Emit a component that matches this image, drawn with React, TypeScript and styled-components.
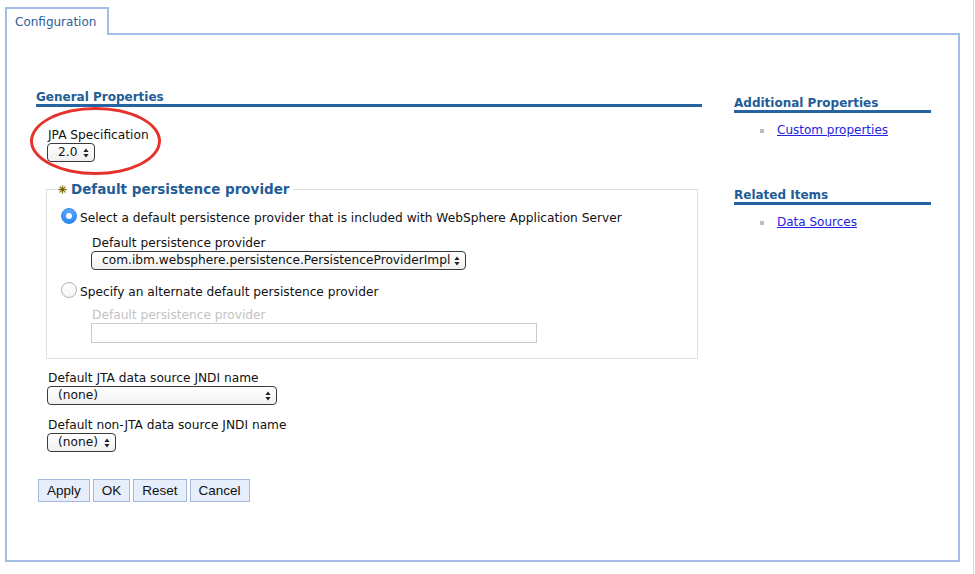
import React from "react";
import styled, { createGlobalStyle } from "styled-components";

const GlobalStyle = createGlobalStyle`
  html, body { margin: 0; padding: 0; background: #fff; }
  body {
    font-family: "DejaVu Sans", Verdana, sans-serif;
    font-size: 12.2px;
    color: #111;
  }
  * { box-sizing: border-box; }
`;

const Page = styled.div`
  width: 974px;
  height: 574px;
  border-right: 1px solid #d6d6d6;
  padding: 7px 0 0 5px;
`;

const TabRow = styled.div`
  display: flex;
  height: 28px;
`;

const Tab = styled.div`
  width: 104px;
  height: 28px;
  border: 2px solid #a3bce8;
  border-bottom: none;
  padding: 6px 0 0 8px;
  font-size: 12px;
  line-height: 15px;
  color: #2a5e95;
`;

const TabFiller = styled.div`
  width: 851px;
  border-bottom: 2px solid #a3bce8;
`;

const Panel = styled.div`
  width: 955px;
  height: 527px;
  border: 2px solid #a3bce8;
  border-top: none;
  display: flex;
  gap: 32px;
  padding: 55px 0 0 29px;
`;

const MainColumn = styled.div`
  width: 666px;
  display: flex;
  flex-direction: column;
  align-items: flex-start;
`;

const SideColumn = styled.div`
  width: 197px;
  padding-top: 6px;
`;

const SectionTitle = styled.div<{ $gap?: number }>`
  align-self: stretch;
  font-weight: bold;
  font-size: 12px;
  line-height: 14px;
  color: #235c96;
  border-bottom: 3px solid #2663a2;
  margin-top: ${(p) => p.$gap ?? 0}px;
`;

const Field = styled.div<{ $gap: number }>`
  position: relative;
  margin-top: ${(p) => p.$gap}px;
  margin-left: 11px;
  display: flex;
  flex-direction: column;
  align-items: flex-start;
`;

const Label = styled.div<{ $disabled?: boolean }>`
  padding-left: 1px;
  line-height: 15px;
  color: ${(p) => (p.$disabled ? "#c3c3c3" : "#111")};
`;

const SelectFrame = styled.div<{ $w: number }>`
  display: flex;
  align-items: center;
  justify-content: space-between;
  width: ${(p) => p.$w}px;
  height: 19px;
  border: 1px solid #3a3a3a;
  border-radius: 4px;
  background: linear-gradient(#ffffff, #f0f0f0);
  padding: 0 5px 0 10px;
  line-height: 15px;
  white-space: nowrap;
`;

const TextInput = styled.div<{ $w: number }>`
  width: ${(p) => p.$w}px;
  height: 20px;
  border: 1px solid #cbcbcb;
  background: #fff;
`;

const Highlight = styled.div`
  position: absolute;
  left: -17px;
  top: -21px;
  width: 131px;
  height: 68px;
  border: 3px solid #e5322b;
  border-radius: 50%;
  pointer-events: none;
`;

const Group = styled.fieldset`
  margin: 19px 0 0 10px;
  width: 652px;
  border: 1px solid #dedede;
  padding: 11px 0 15px 14px;
  min-width: 0;
`;

const Legend = styled.legend`
  display: flex;
  align-items: center;
  gap: 4px;
  padding: 0 3px 0 0;
  margin-left: -3px;
  font-weight: bold;
  font-size: 13.5px;
  line-height: 16px;
  color: #235c96;
`;

const RadioRow = styled.div<{ $gap?: number }>`
  display: flex;
  align-items: flex-start;
  gap: 3px;
  margin-top: ${(p) => p.$gap ?? 0}px;
`;

const Radio = styled.span<{ $checked?: boolean }>`
  position: relative;
  flex: none;
  width: 16px;
  height: 16px;
  border-radius: 50%;
  background: ${(p) =>
    p.$checked ? "linear-gradient(#5aa9fd, #2a88f2)" : "linear-gradient(#ffffff, #f4f4f4)"};
  border: 1px solid ${(p) => (p.$checked ? "#2d86ea" : "#b3b3b3")};
  &::after {
    content: "";
    display: ${(p) => (p.$checked ? "block" : "none")};
    position: absolute;
    left: 4px;
    top: 4px;
    width: 6px;
    height: 6px;
    border-radius: 50%;
    background: #fff;
  }
`;

const RadioText = styled.span`
  padding-top: 2px;
  line-height: 16px;
`;

const Indented = styled.div<{ $gap: number }>`
  margin: ${(p) => p.$gap}px 0 0 30px;
  display: flex;
  flex-direction: column;
  align-items: flex-start;
`;

const ButtonRow = styled.div`
  display: flex;
  gap: 3px;
  margin: 27px 0 0 2px;
`;

const Button = styled.button`
  height: 23px;
  padding: 0 8px;
  font-family: "Liberation Sans", Arial, sans-serif;
  font-size: 13.5px;
  color: #111;
  background: #e6eefb;
  border: 1px solid #a4b9dc;
  border-radius: 0;
`;

const LinkList = styled.ul<{ $gap: number }>`
  list-style: none;
  margin: ${(p) => p.$gap}px 0 0 0;
  padding: 0 0 0 26px;
`;

const LinkItem = styled.li`
  display: flex;
  align-items: center;
  gap: 13px;
  line-height: 15px;
`;

const Bullet = styled.span`
  width: 4px;
  height: 4px;
  background: #bdbdbd;
  margin-top: 1px;
`;

const Link = styled.a`
  color: #2323df;
  font-size: 12px;
  text-decoration: underline;
`;

const Arrows = () => (
  <svg width="6" height="10" viewBox="0 0 6 10">
    <path d="M3 0.6 L5.6 4 H0.4Z M3 9.4 L5.6 6 H0.4Z" fill="#222" />
  </svg>
);

const Star = () => (
  <svg width="9" height="9" viewBox="0 0 9 9">
    <g stroke="#8c7b22" strokeWidth="1.3" strokeLinecap="round">
      <line x1="4.5" y1="0.8" x2="4.5" y2="8.2" />
      <line x1="0.8" y1="4.5" x2="8.2" y2="4.5" />
      <line x1="1.9" y1="1.9" x2="7.1" y2="7.1" />
      <line x1="7.1" y1="1.9" x2="1.9" y2="7.1" />
    </g>
    <circle cx="4.5" cy="4.5" r="1.6" fill="#6d5d10" />
  </svg>
);

const Select = ({ w, children }: { w: number; children: React.ReactNode }) => (
  <SelectFrame $w={w}>
    <span>{children}</span>
    <Arrows />
  </SelectFrame>
);

export default function App() {
  return (
    <>
      <GlobalStyle />
      <Page>
        <TabRow>
          <Tab>Configuration</Tab>
          <TabFiller />
        </TabRow>
        <Panel>
          <MainColumn>
            <SectionTitle>General Properties</SectionTitle>
            <Field $gap={21}>
              <Highlight />
              <Label>JPA Specification</Label>
              <Select w={48}>2.0</Select>
            </Field>
            <Group>
              <Legend>
                <Star />
                Default persistence provider
              </Legend>
              <RadioRow>
                <Radio $checked />
                <RadioText>
                  Select a default persistence provider that is included with WebSphere Application Server
                </RadioText>
              </RadioRow>
              <Indented $gap={10}>
                <Label>Default persistence provider</Label>
                <Select w={375}>com.ibm.websphere.persistence.PersistenceProviderImpl</Select>
              </Indented>
              <RadioRow $gap={12}>
                <Radio />
                <RadioText>Specify an alternate default persistence provider</RadioText>
              </RadioRow>
              <Indented $gap={8}>
                <Label $disabled>Default persistence provider</Label>
                <TextInput $w={446} />
              </Indented>
            </Group>
            <Field $gap={12}>
              <Label>Default JTA data source JNDI name</Label>
              <Select w={230}>(none)</Select>
            </Field>
            <Field $gap={13}>
              <Label>Default non-JTA data source JNDI name</Label>
              <Select w={69}>(none)</Select>
            </Field>
            <ButtonRow>
              <Button>Apply</Button>
              <Button>OK</Button>
              <Button>Reset</Button>
              <Button>Cancel</Button>
            </ButtonRow>
          </MainColumn>
          <SideColumn>
            <SectionTitle>Additional Properties</SectionTitle>
            <LinkList $gap={10}>
              <LinkItem>
                <Bullet />
                <Link href="#">Custom properties</Link>
              </LinkItem>
            </LinkList>
            <SectionTitle $gap={50}>Related Items</SectionTitle>
            <LinkList $gap={10}>
              <LinkItem>
                <Bullet />
                <Link href="#">Data Sources</Link>
              </LinkItem>
            </LinkList>
          </SideColumn>
        </Panel>
      </Page>
    </>
  );
}
